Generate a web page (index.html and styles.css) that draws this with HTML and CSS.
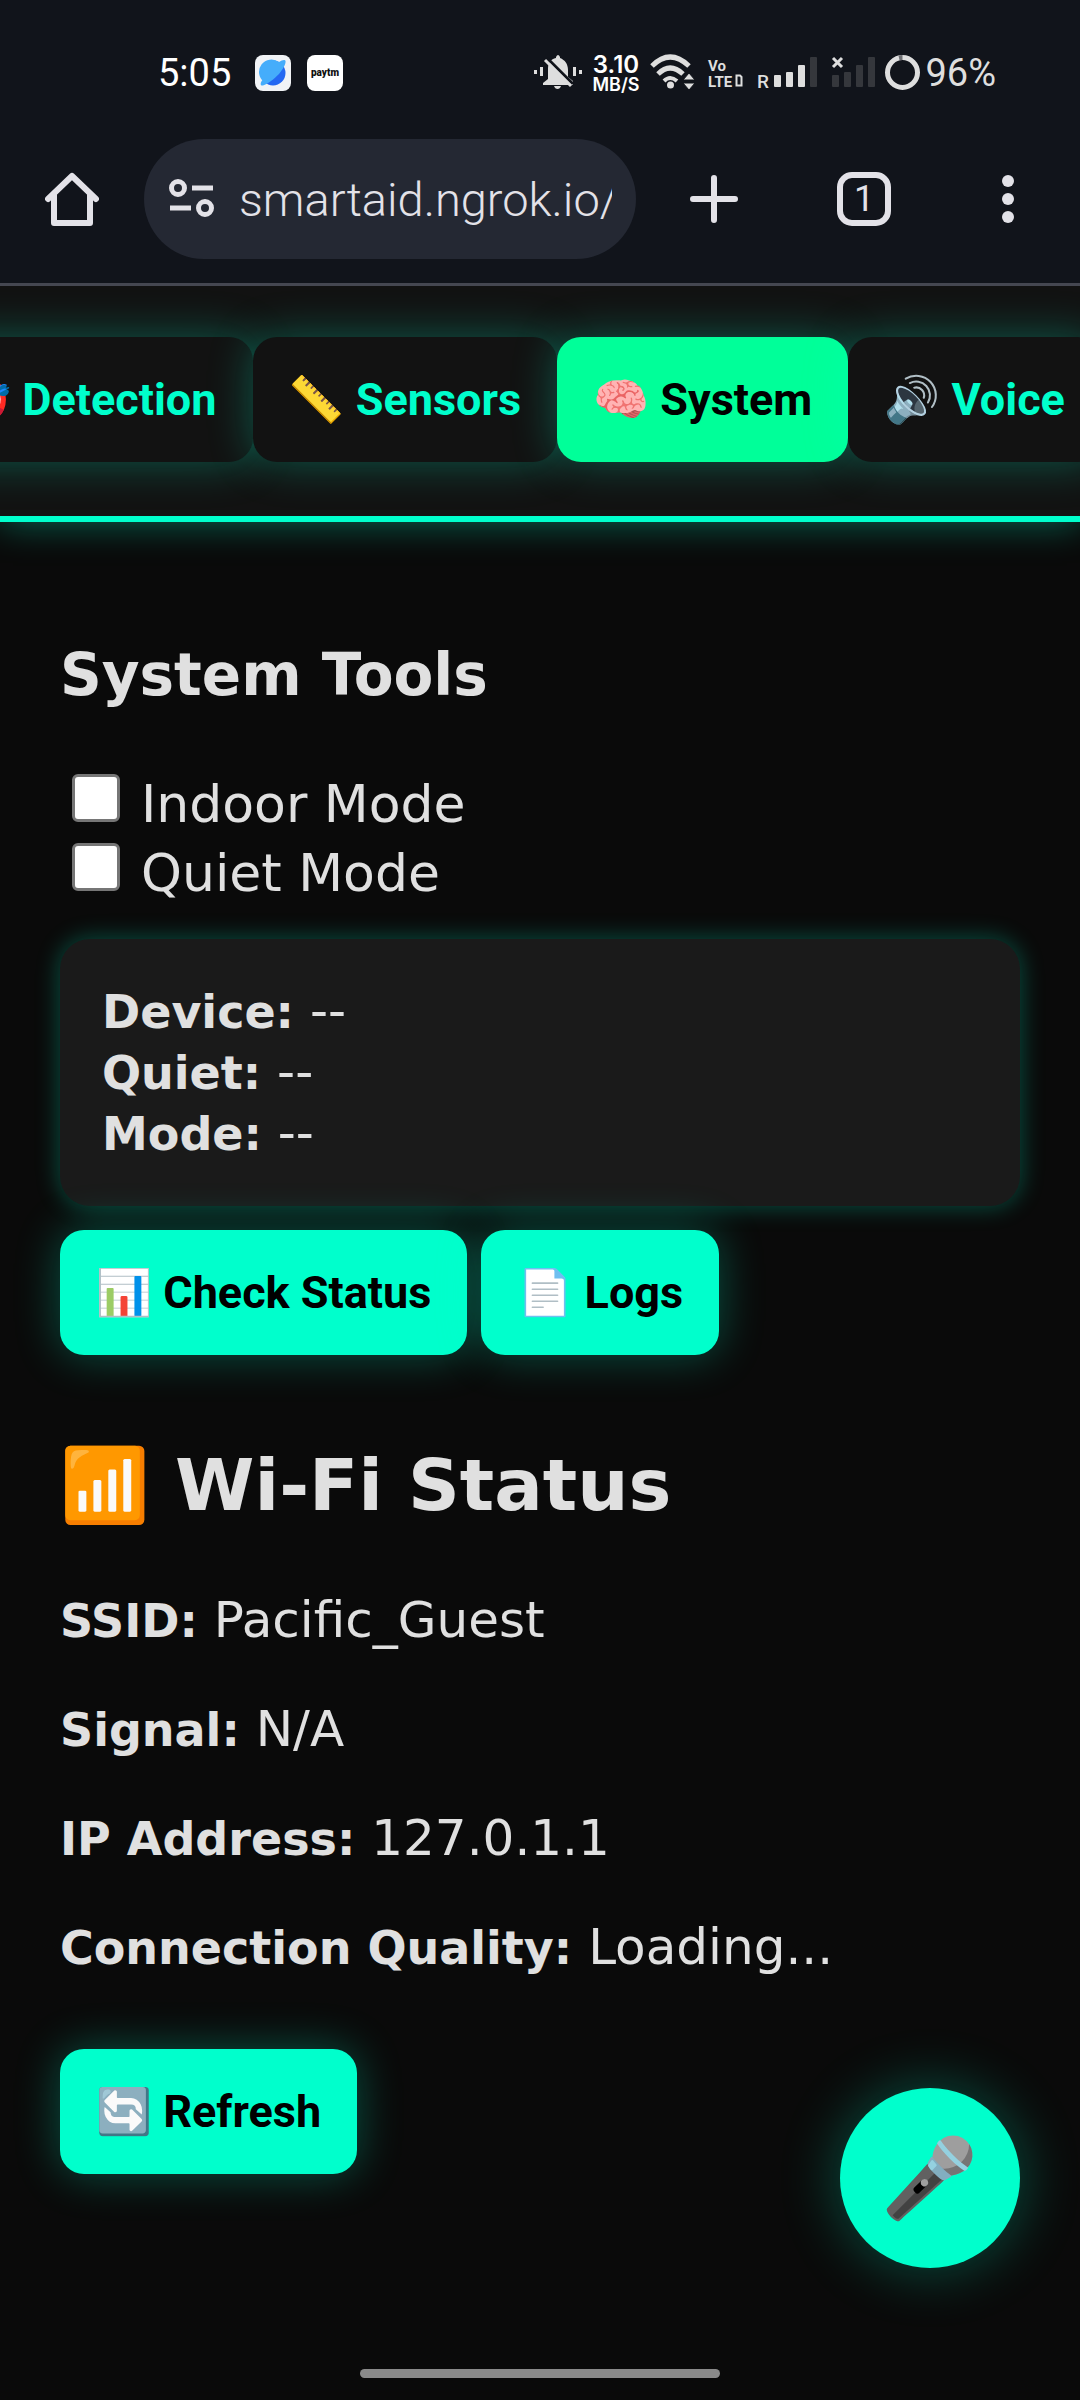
FILE: index.html
```html
<!DOCTYPE html>
<html lang="en">
<head>
<meta charset="utf-8">
<meta name="viewport" content="width=device-width, initial-scale=1">
<title>Smart Aid – System Tools</title>
<link rel="stylesheet" href="styles.css">
</head>
<body>
<header class="chrome">
  <div class="status">
    <span class="status-time">5:05</span>
    <svg class="app-icon" viewBox="0 0 36 36" aria-hidden="true">
      <rect width="36" height="36" rx="8" fill="#f1f3f6"/>
      <circle cx="18" cy="18" r="12.500" fill="#2468f2"/>
      <path d="M9 27A12.500 12.500 0 0 1 24 7C27 5 30 4 30.500 6C31 9 28 14 24 19C19 24 13 29 8 30.500C5 31 5 28 7.500 25Z" fill="#45adfb"/>
    </svg>
    <svg class="app-icon" viewBox="0 0 36 36" aria-hidden="true">
      <rect width="36" height="36" rx="8" fill="#fff"/>
      <text class="tiny-logo" x="18" y="21" text-anchor="middle">paytm</text>
    </svg>
    <svg class="status-icons" viewBox="535 53 386 40" aria-hidden="true">
      <g fill="#dedede">
        <path d="M544 85V83L549 79V69C549 63 552 59 557 58V57Q559 53 561 57V58C566 60 569 64 569 70V77L574 81V85Z"/>
        <path d="M555 86H562Q561 89 558.500 89T555 86Z"/>
        <rect x="535" y="70" width="3" height="4"/>
        <rect x="541" y="67" width="3" height="9"/>
        <rect x="574" y="67" width="3" height="9"/>
        <rect x="580" y="70" width="3" height="4"/>
      </g>
      <path d="M548 58L574 84" stroke="#11141b" stroke-width="3"/>
      <path d="M546 60L572 86" stroke="#dedede" stroke-width="3"/>
      <text class="net" x="617" y="73" text-anchor="middle" font-size="24">3.10</text>
      <text class="net" x="617" y="91" text-anchor="middle" font-size="18">MB/S</text>
      <g fill="none" stroke="#dedede" stroke-width="5">
        <path d="M653 66Q671 48 690 66"/>
        <path d="M659 74Q671 62 684 74"/>
        <path d="M665 81Q671 75 678 81" stroke-width="4"/>
      </g>
      <circle cx="671.500" cy="85" r="3.500" fill="#dedede"/>
      <path d="M690 73L696 80H684ZM690 90L696 83H684Z" fill="#dedede" stroke="#11141b"/>
      <text class="volte" x="709" y="71">Vo</text>
      <text class="volte" x="709" y="87">LTE</text>
      <path d="M737.500 75.500H741L742.500 77V85.500H737.500Z" stroke="#dedede" stroke-width="2" fill="none"/>
      <text class="roam" x="758" y="88">R</text>
      <g fill="#dedede">
        <rect x="775" y="75" width="7" height="12" rx="1"/>
        <rect x="787" y="72" width="7" height="15" rx="1"/>
        <rect x="799" y="65" width="7" height="22" rx="1"/>
      </g>
      <g fill="#35373c">
        <rect x="811" y="57" width="7" height="30" rx="1"/>
        <rect x="833" y="75" width="7" height="12" rx="1"/>
        <rect x="845" y="72" width="7" height="15" rx="1"/>
        <rect x="857" y="65" width="7" height="22" rx="1"/>
        <rect x="869" y="57" width="7" height="30" rx="1"/>
      </g>
      <path d="M834 58L843 67M843 58L834 67" stroke="#dedede" stroke-width="3"/>
      <circle cx="903.500" cy="72.500" r="15" fill="none" stroke="#dedede" stroke-width="5"/>
      <path d="M900 57.900A15 15 0 0 1 903.500 57.500" fill="none" stroke="#6d6e72" stroke-width="5"/>
    </svg>
    <span class="status-battery">96%</span>
  </div>
  <div class="toolbar">
    <button class="tool" type="button" aria-label="Home">
      <svg width="54" height="54" viewBox="0 0 54 54" fill="none" stroke="#e3e2e8" stroke-width="6" stroke-linecap="round" stroke-linejoin="round"><path d="M3 27L27 4L51 27"/><path d="M9 23V51H45V23"/></svg>
    </button>
    <form class="address">
      <svg width="46" height="40" viewBox="0 0 46 40" fill="none" stroke="#e3e2e8" stroke-width="5"><circle cx="9" cy="9" r="6.500"/><path d="M23 9H44M1 29H22"/><circle cx="36" cy="29" r="6.500"/></svg>
      <input class="address-input" type="text" aria-label="Address" value="smartaid.ngrok.io/">
    </form>
    <button class="tool tool-wide" type="button" aria-label="New tab">
      <svg width="48" height="48" viewBox="0 0 48 48" stroke="#e3e2e8" stroke-width="6" stroke-linecap="round"><path d="M3 24H45M24 3V45"/></svg>
    </button>
    <button class="tool" type="button" aria-label="Open tabs"><span class="tab-count">1</span></button>
    <button class="tool" type="button" aria-label="Menu">
      <svg width="12" height="48" viewBox="0 0 12 48" fill="#e3e2e8"><circle cx="6" cy="6" r="6"/><circle cx="6" cy="24" r="6"/><circle cx="6" cy="42" r="6"/></svg>
    </button>
  </div>
</header>

<nav class="tabs">
  <button class="btn tab" type="button">🎯 Detection</button>
  <button class="btn tab" type="button">📏 Sensors</button>
  <button class="btn tab tab-active" type="button">🧠 System</button>
  <button class="btn tab" type="button">🔊 Voice</button>
</nav>

<main class="page">
  <h2 class="title">System Tools</h2>
  <label class="check"><input class="box" type="checkbox">Indoor Mode</label>
  <label class="check"><input class="box" type="checkbox">Quiet Mode</label>
  <section class="card">
    <div><b>Device:</b> --</div>
    <div><b>Quiet:</b> --</div>
    <div><b>Mode:</b> --</div>
  </section>
  <div class="actions">
    <button class="btn" type="button">📊 Check Status</button>
    <button class="btn" type="button">📄 Logs</button>
  </div>
  <h1 class="wifi">📶 Wi-Fi Status</h1>
  <p class="row"><b>SSID:</b> Pacific_Guest</p>
  <p class="row"><b>Signal:</b> N/A</p>
  <p class="row"><b>IP Address:</b> 127.0.1.1</p>
  <p class="row"><b>Connection Quality:</b> Loading...</p>
  <button class="btn refresh" type="button">🔄 Refresh</button>
</main>

<button class="mic" type="button" aria-label="Voice input">🎤</button>
<div class="home-bar"></div>
</body>
</html>
```
FILE: styles.css
```css
* { box-sizing: border-box; }

body {
  margin: 0;
  min-height: 100vh;
  overflow-x: hidden;
  background: #0a0a0a;
  color: #e0e0e0;
  font-family: "DejaVu Sans", sans-serif;
  font-size: 50px;
}

button, input { font: inherit; }

.chrome {
  position: relative;
  z-index: 1;
  background: #11141b;
  border-bottom: 3px solid #454751;
  font-family: Roboto, sans-serif;
}

.status {
  display: flex;
  align-items: center;
  height: 120px;
  padding: 26px 84px 0 158px;
  color: #fff;
}
.status-time { font-size: 38px; margin-right: 24px; }
.app-icon { width: 36px; height: 36px; margin-right: 16px; }
.status-icons { width: 386px; height: 40px; margin-left: auto; overflow: visible; }
.status-battery { font-size: 38px; margin-left: 5px; color: #dedede; }
.tiny-logo { font: 900 10px Roboto, sans-serif; fill: #111; }
.net { font-family: Inter, sans-serif; font-weight: 600; fill: #fff; }
.volte { font: 700 15px Roboto, sans-serif; fill: #dedede; }
.roam { font: 500 19px Roboto, sans-serif; fill: #dedede; }

.toolbar { display: flex; align-items: center; padding: 19px 0 24px; }
.tool {
  display: flex;
  align-items: center;
  justify-content: center;
  flex: none;
  width: 144px;
  height: 120px;
  padding: 0;
  border: 0;
  background: none;
}
.tool-wide { width: 156px; }
.address {
  display: flex;
  align-items: center;
  flex: 1;
  min-width: 0;
  gap: 24px;
  height: 120px;
  padding: 0 24px 0 25px;
  border-radius: 60px;
  background: #242833;
}
.address svg { flex: none; }
.address-input {
  flex: 1;
  min-width: 0;
  padding: 0;
  border: 0;
  background: none;
  color: #e3e2e8;
  font-size: 47px;
  font-weight: 300;
}
.tab-count {
  display: grid;
  place-items: center;
  width: 54px;
  height: 54px;
  border: 6px solid #e3e2e8;
  border-radius: 15px;
  color: #e3e2e8;
  font-size: 36px;
  line-height: 42px;
}

.tabs {
  display: flex;
  overflow: hidden;
  padding: 51px 0 54px;
  background: #121212;
  border-bottom: 6px solid #00ffcc;
  box-shadow: 0 0 36px rgba(0, 255, 204, .4);
}
.btn {
  flex: none;
  height: 125px;
  padding: 0 36px;
  border: 0;
  border-radius: 24px;
  background: #00ffcc;
  color: #000;
  box-shadow: 0 0 45px rgba(0, 255, 204, .3);
  font-family: Roboto, "Noto Color Emoji", sans-serif;
  font-size: 45px;
  font-weight: 700;
  white-space: nowrap;
}
.tab { background: #121212; color: #00ffcc; }
.tab:first-child { margin-left: -81px; }
.tab-active { background: #00ff99; color: #000; }

.page { padding: 117px 60px 226px; }
.title { margin: 0 0 59px; font-size: 58px; line-height: 72px; }
.check {
  display: flex;
  align-items: baseline;
  gap: 21px;
  padding-left: 12px;
  font-size: 52px;
  line-height: 69px;
}
.box {
  appearance: none;
  flex: none;
  width: 48px;
  height: 48px;
  margin: 0;
  border: 3px solid #767676;
  border-radius: 6px;
  background: #fff;
}
.card {
  margin: 31px 0 24px;
  padding: 42px;
  border-radius: 30px;
  background: #1a1a1a;
  box-shadow: 0 0 24px rgba(0, 255, 204, .3);
  line-height: 61px;
}
.card b, .row b { font-size: 46px; line-height: 46px; }
.actions { display: flex; gap: 14px; margin-bottom: 85px; }
.wifi { margin: 0 0 60px; font-size: 72px; line-height: 90px; }
.row { margin: 0 0 48px; line-height: 61px; }
.refresh { margin-top: 23px; }

.mic {
  position: fixed;
  right: 60px;
  bottom: 132px;
  width: 180px;
  height: 180px;
  padding: 0;
  border: 0;
  border-radius: 50%;
  background: #00ffcc;
  box-shadow: 0 0 60px rgba(0, 255, 204, .3);
  font-family: "Noto Color Emoji", sans-serif;
  font-size: 78px;
}
.home-bar {
  position: fixed;
  left: 50%;
  bottom: 22px;
  width: 360px;
  height: 9px;
  margin-left: -180px;
  border-radius: 5px;
  background: #8a8a8a;
}
```
